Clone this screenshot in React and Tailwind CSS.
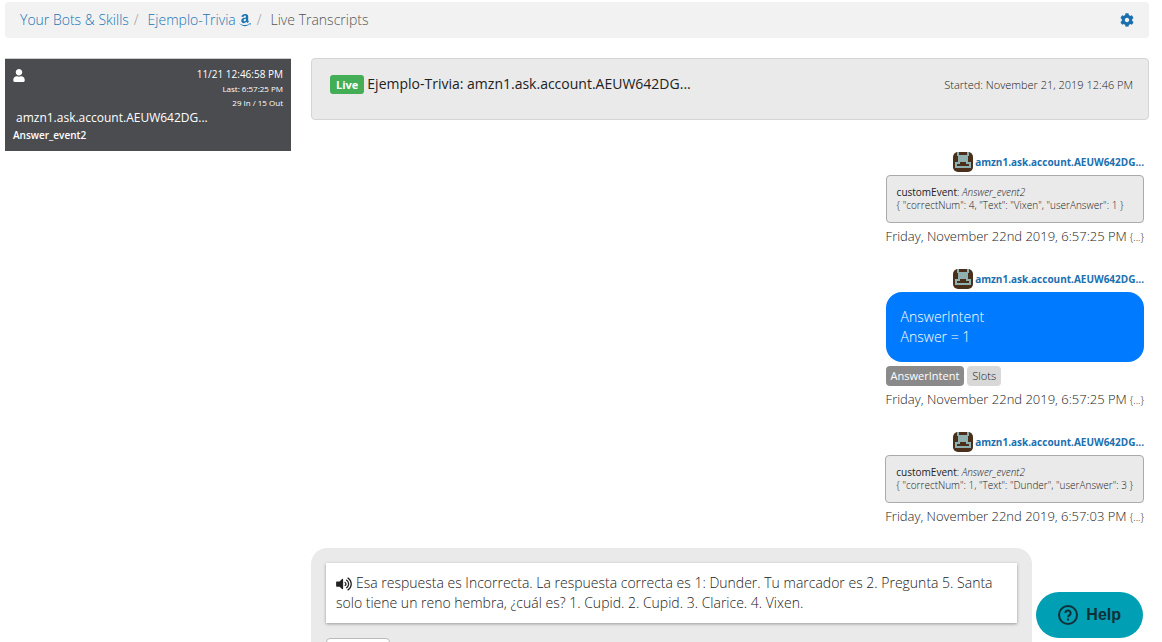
import { FaAmazon, FaCog, FaUser, FaVolumeUp } from 'react-icons/fa'

const ACCOUNT = 'amzn1.ask.account.AEUW642DG...'

function Breadcrumb() {
  return (
    <header className="flex h-9 items-center justify-between rounded bg-[#f2f2f2] px-[15px] text-sm">
      <nav aria-label="Breadcrumb">
        <ol className="flex items-center">
          <li>
            <a href="#bots" className="text-[#1b75b5]">Your Bots &amp; Skills</a>
          </li>
          <li className="flex items-center">
            <span className="px-[5px] text-[#999]">/</span>
            <a href="#bot" className="ml-1 flex items-center gap-0.5 text-[#1b75b5]">
              Ejemplo-Trivia <FaAmazon className="size-3.5" />
            </a>
          </li>
          <li className="flex items-center text-[#555]">
            <span className="px-[5px] text-[#999]">/</span>
            <span className="ml-1">Live Transcripts</span>
          </li>
        </ol>
      </nav>
      <button aria-label="Settings" className="text-[#1b6faf]">
        <FaCog className="size-3.5" />
      </button>
    </header>
  )
}

function SessionCard() {
  return (
    <a href="#session" className="block h-[93px] border-t border-[#ccc] bg-[#4b4c50] px-2 pt-2 text-white">
      <div className="flex items-start justify-between">
        <FaUser className="mt-0.5 h-[13px] w-3" />
        <div className="text-right text-[8px] font-normal leading-[14px]">
          <div className="text-[10px] leading-[15px]">11/21 12:46:58 PM</div>
          <div>Last: 6:57:25 PM</div>
          <div>29 In / 15 Out</div>
        </div>
      </div>
      <div className="pl-[3px] text-xs font-normal leading-4">{ACCOUNT}</div>
      <div className="text-[10px] font-semibold leading-[18px]">Answer_event2</div>
    </a>
  )
}

function Avatar() {
  return (
    <svg viewBox="0 0 20 20" className="size-5 rounded-[5px]" aria-hidden="true">
      <rect width="20" height="20" fill="#4a2f1b" />
      <path fill="#8fb0ae" d="M4 0h2v3h8V0h2v4h-1v6h3v6H2v-6h3V4H4z" />
      <path fill="#4a2f1b" d="M7 10h6v2h3v2H4v-2h3z" />
    </svg>
  )
}

function UserMessage({ date, children }) {
  return (
    <article className="flex flex-col items-end">
      <div className="flex items-center gap-0.5">
        <Avatar />
        <a href="#user" className="text-[10px] font-bold leading-5 text-[#1b6faf]">{ACCOUNT}</a>
      </div>
      <div className="mt-[3px]">
        {children}
        <div className="mt-1 flex h-5 items-center justify-between gap-[3px]">
          <time className="text-[13px]">{date}</time>
          <button className="text-[10px]">{'{...}'}</button>
        </div>
      </div>
    </article>
  )
}

function EventBox({ payload }) {
  return (
    <div className="rounded border border-[#aaa] bg-[#eaeaea] p-2.5 text-[10px] leading-[13px]">
      <div>
        <span className="font-normal">customEvent</span>: <em>Answer_event2</em>
      </div>
      <div>{payload}</div>
    </div>
  )
}

export default function App() {
  return (
    <div className="h-screen overflow-hidden bg-white pl-[5px] pr-[13px] pt-0.5 font-['Open_Sans',sans-serif] font-light text-[#222]">
      <Breadcrumb />

      <div className="mt-5 flex items-start">
        <aside className="w-1/4 shrink-0">
          <SessionCard />
        </aside>

        <main className="min-w-0 flex-1 pl-5">
          <div className="flex h-[62px] items-start justify-between rounded border border-[#d5d5d5] bg-[#eaeaea] pl-[18px] pr-[15px] pt-[15px] leading-5">
            <h1 className="flex items-center gap-[3px] text-sm font-normal">
              <span className="rounded-[3px] bg-[#43ae55] px-1.5 text-[11px] font-bold leading-[19px] text-white">
                Live
              </span>
              Ejemplo-Trivia: {ACCOUNT}
            </h1>
            <span className="text-[11px] leading-[22px]">Started: November 21, 2019 12:46 PM</span>
          </div>

          <section className="mt-8 flex flex-col gap-[22px] pr-[5px]">
            <UserMessage date="Friday, November 22nd 2019, 6:57:25 PM">
              <EventBox payload={'{ "correctNum": 4, "Text": "Vixen", "userAnswer": 1 }'} />
            </UserMessage>

            <UserMessage date="Friday, November 22nd 2019, 6:57:25 PM">
              <div className="rounded-2xl bg-[#007bff] p-[15px] text-sm leading-5 text-white">
                AnswerIntent
                <br />
                Answer = 1
              </div>
              <div className="mt-1 flex gap-[3px] text-[11px] leading-5">
                <span className="rounded bg-[#8a8a8a] px-[5px] font-normal text-white">AnswerIntent</span>
                <span className="rounded bg-[#d8d8d8] px-[5px]">Slots</span>
              </div>
            </UserMessage>

            <UserMessage date="Friday, November 22nd 2019, 6:57:03 PM">
              <EventBox payload={'{ "correctNum": 1, "Text": "Dunder", "userAnswer": 3 }'} />
            </UserMessage>
          </section>

          <article className="mt-[21px] max-w-[86%] rounded-t-2xl bg-[#eaeaea] p-[15px]">
            <p className="bg-white p-2.5 text-sm leading-5 shadow-[0_1px_3px_rgba(0,0,0,0.35)]">
              <FaVolumeUp className="mr-1 inline h-3.5 w-4" />
              Esa respuesta es Incorrecta. La respuesta correcta es 1: Dunder. Tu marcador es 2. Pregunta 5.
              Santa solo tiene un reno hembra, ¿cuál es? 1. Cupid. 2. Cupid. 3. Clarice. 4. Vixen.
            </p>
            <button aria-label="Response details" className="mt-[15px] h-6 w-16 rounded border border-[#bbb] bg-white" />
          </article>
        </main>
      </div>

      <button className="fixed bottom-1 right-[19px] flex h-[46px] items-center gap-2 rounded-full bg-[#009fb3] px-[22px] font-['Liberation_Sans',sans-serif] text-base font-bold text-[#0f3036]">
        <svg viewBox="0 0 20 20" className="size-5" fill="none" stroke="currentColor" strokeWidth="2" aria-hidden="true">
          <circle cx="10" cy="10" r="9" />
          <path d="M7.4 8.1a2.6 2.6 0 1 1 3.9 2.2c-.8.5-1.3.9-1.3 1.9" />
          <path d="M10 13.4v2" />
        </svg>
        Help
      </button>
    </div>
  )
}
